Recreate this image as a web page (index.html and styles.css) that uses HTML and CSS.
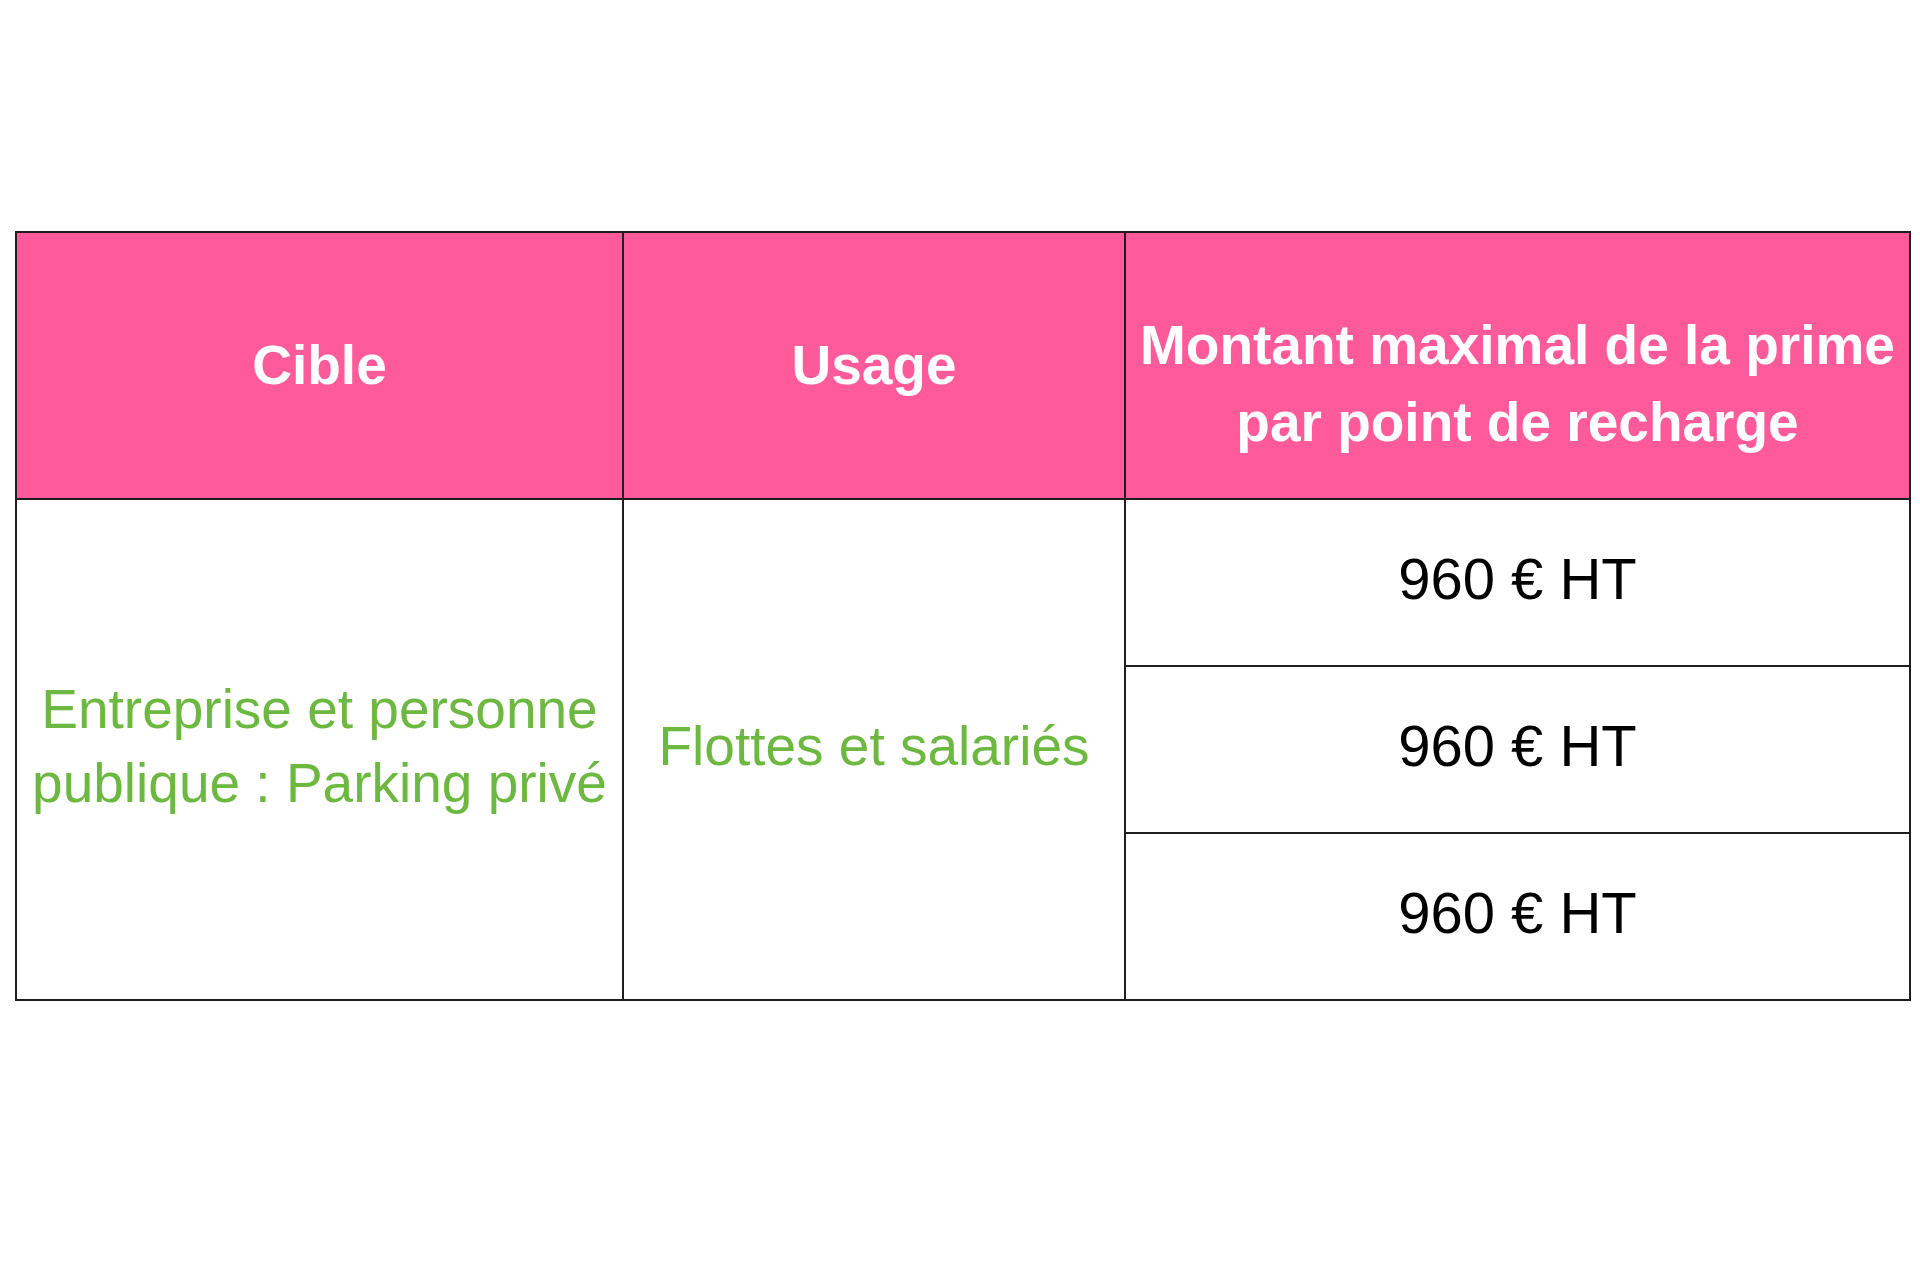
FILE: index.html
```html
<!DOCTYPE html>
<html lang="fr">
<head>
<meta charset="utf-8">
<title>Prime borne de recharge</title>
<link rel="stylesheet" href="styles.css">
</head>
<body>
<table class="prime">
  <colgroup>
    <col class="c1">
    <col class="c2">
    <col class="c3">
  </colgroup>
  <thead>
    <tr class="head">
      <th>Cible</th>
      <th>Usage</th>
      <th class="wide">Montant maximal de la prime<br>par point de recharge</th>
    </tr>
  </thead>
  <tbody>
    <tr class="row">
      <td class="green" rowspan="3">Entreprise et personne<br>publique : Parking privé</td>
      <td class="green" rowspan="3">Flottes et salariés</td>
      <td class="amount">960 € HT</td>
    </tr>
    <tr class="row">
      <td class="amount">960 € HT</td>
    </tr>
    <tr class="row">
      <td class="amount">960 € HT</td>
    </tr>
  </tbody>
</table>
</body>
</html>
```

FILE: styles.css
```css
html, body {
  margin: 0;
  padding: 0;
  background: #ffffff;
}

body {
  font-family: "Liberation Sans", Arial, sans-serif;
  width: 1920px;
  height: 1278px;
  overflow: hidden;
}

.prime {
  border-collapse: collapse;
  table-layout: fixed;
  width: 1894px;
  margin: 231px 0 0 15px;
  border: 2px solid #1e1e1e;
}

.c1 { width: 607px; }
.c2 { width: 502px; }
.c3 { width: 785px; }

.prime th,
.prime td {
  border: 2px solid #1e1e1e;
  padding: 0;
  text-align: center;
  vertical-align: middle;
}

.head {
  height: 267px;
}

.head th {
  background: #ff5b9b;
  color: #ffffff;
  font-weight: 700;
  font-size: 55px;
  line-height: 77px;
}

.head th.wide {
  padding-top: 36px;
}

.row {
  height: 167px;
}

.prime td.green {
  color: #6cb840;
  font-size: 55px;
  line-height: 74px;
  padding-bottom: 8px;
}

.prime td.amount {
  color: #000000;
  font-size: 58px;
  line-height: 66px;
  padding-bottom: 8px;
}
```
